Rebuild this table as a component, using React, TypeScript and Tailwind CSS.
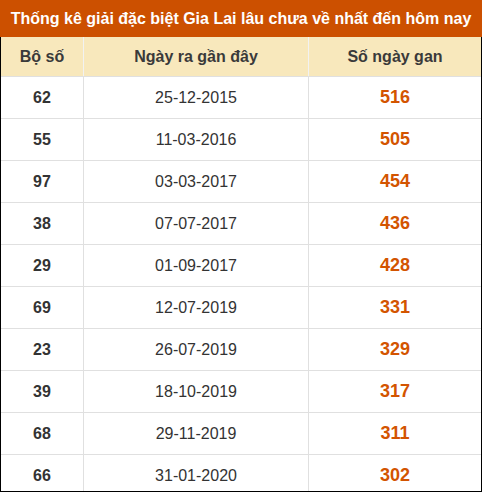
const ROWS = [
  { bo: "62", ngay: "25-12-2015", gan: 516 },
  { bo: "55", ngay: "11-03-2016", gan: 505 },
  { bo: "97", ngay: "03-03-2017", gan: 454 },
  { bo: "38", ngay: "07-07-2017", gan: 436 },
  { bo: "29", ngay: "01-09-2017", gan: 428 },
  { bo: "69", ngay: "12-07-2019", gan: 331 },
  { bo: "23", ngay: "26-07-2019", gan: 329 },
  { bo: "39", ngay: "18-10-2019", gan: 317 },
  { bo: "68", ngay: "29-11-2019", gan: 311 },
  { bo: "66", ngay: "31-01-2020", gan: 302 },
];

const App = () => {
  return (
    <div className="w-[482px] bg-white font-['Liberation_Sans',Arial,sans-serif]">
      <div className="h-[37px] bg-[#cc5000] text-white font-bold text-[16px] whitespace-nowrap flex items-center justify-center">
        Thống kê giải đặc biệt Gia Lai lâu chưa về nhất đến hôm nay
      </div>
      <div className="h-[455px] overflow-hidden border-x border-b border-black">
        <div className="grid grid-cols-[83px_225px_1fr] h-[40px] bg-[#f8e8bc] border-b border-[#e0e0e0] text-[16px] font-bold text-[#3a3a3a]">
          <div className="flex items-center justify-center border-r border-[#f2f2f2]">Bộ số</div>
          <div className="flex items-center justify-center border-r border-[#f2f2f2]">Ngày ra gần đây</div>
          <div className="flex items-center justify-center">Số ngày gan</div>
        </div>
        {ROWS.map((row, index) => (
          <div
            key={index}
            className="grid grid-cols-[83px_225px_1fr] h-[42px] border-b border-[#e0e0e0] text-[#333]"
          >
            <div className="flex items-center justify-center border-r border-[#e0e0e0] font-bold text-[16px]">
              {row.bo}
            </div>
            <div className="flex items-center justify-center border-r border-[#e0e0e0] text-[16px]">
              {row.ngay}
            </div>
            <div className="flex items-center justify-center font-bold text-[18px] text-[#d35400]">
              {row.gan}
            </div>
          </div>
        ))}
      </div>
    </div>
  );
};

export default App;
